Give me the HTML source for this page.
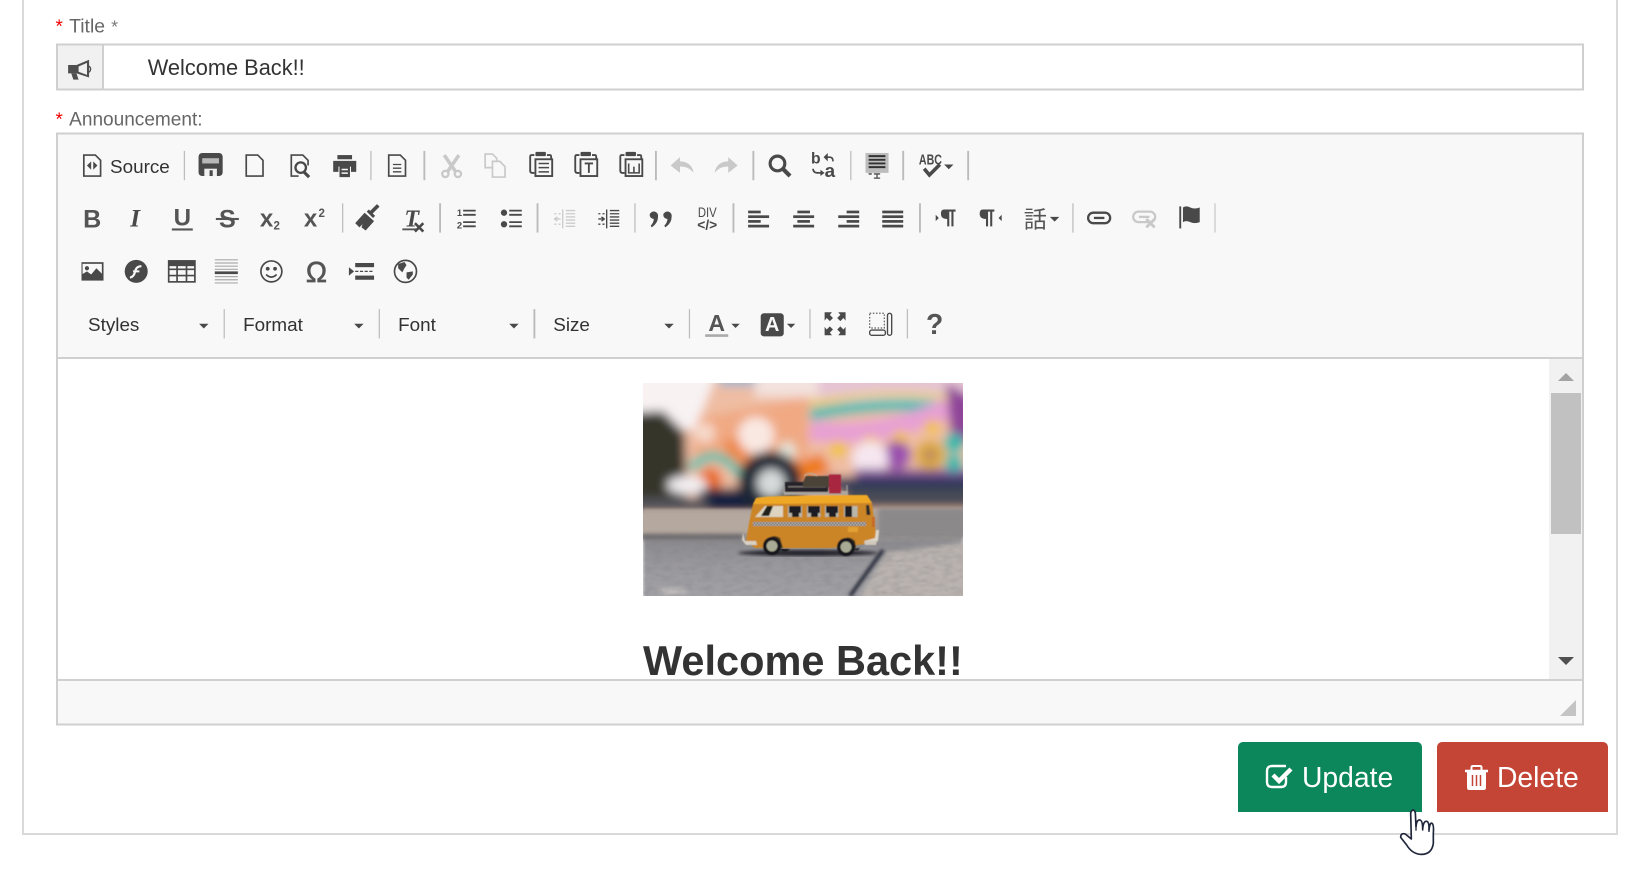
<!DOCTYPE html>
<html><head><meta charset="utf-8"><title>Announcement</title>
<style>
html,body{margin:0;padding:0;background:#fff;width:1643px;height:879px;overflow:hidden}
svg{display:block}
text{font-family:"Liberation Sans","Noto Sans CJK JP",sans-serif}
.s{fill:none;stroke:#4a4a4a}
.f{fill:#4a4a4a}
.g{fill:none;stroke:#c9c9c9}
.gf{fill:#c9c9c9}
.t{fill:#555;font-weight:bold}
.l{fill:#333;font-size:18px}
.sep{stroke:#bdbdbd;stroke-width:1.2}
</style></head><body>
<svg width="1643" height="879" viewBox="0 0 1643 879" xmlns="http://www.w3.org/2000/svg">
<defs>
<filter id="b" x="-10%" y="-10%" width="120%" height="120%"><feGaussianBlur stdDeviation="5"/></filter>
<filter id="b2" x="-10%" y="-10%" width="120%" height="120%"><feGaussianBlur stdDeviation="1.600"/></filter>
<filter id="b3" x="-10%" y="-30%" width="120%" height="160%"><feGaussianBlur stdDeviation="2.500"/></filter>
<filter id="bus" x="-5%" y="-5%" width="110%" height="110%"><feGaussianBlur stdDeviation=".6"/></filter>
<filter id="soft" x="0" y="0" width="100%" height="100%"><feGaussianBlur stdDeviation=".35"/></filter>
<filter id="noise" x="0" y="0" width="100%" height="100%"><feTurbulence type="fractalNoise" baseFrequency=".1 .25" numOctaves="3" seed="4"/><feColorMatrix values="0 0 0 0 .2  0 0 0 0 .2  0 0 0 0 .22  1.6 0 0 0 -.62"/><feGaussianBlur stdDeviation=".5"/></filter>
<clipPath id="ph"><rect width="320" height="213"/></clipPath>
<clipPath id="cnt"><rect x="58" y="359" width="1490" height="321"/></clipPath>
<linearGradient id="gr" x1="0" y1="0" x2="0" y2="1"><stop offset="0" stop-color="#b0a49c"/><stop offset=".25" stop-color="#a69e99"/><stop offset=".35" stop-color="#8c8b8f"/><stop offset=".6" stop-color="#9a999d"/><stop offset="1" stop-color="#a5a4a8"/></linearGradient>
<pattern id="ck" width="3" height="3" patternUnits="userSpaceOnUse"><rect width="3" height="3" fill="#3a3a3a"/><rect width="1.5" height="1.5" fill="#c8c8c8"/><rect x="1.5" y="1.5" width="1.5" height="1.5" fill="#c8c8c8"/></pattern>
</defs>

<!-- panel -->
<path d="M23 0V834H1617V0" fill="none" stroke="#d9d9d9" stroke-width="2"/>

<!-- title field -->
<rect x="57" y="44.500" width="1526" height="45" fill="#fff" stroke="#cfcfcf" stroke-width="2"/>
<rect x="58" y="45.500" width="45" height="43" fill="#f1f1f1"/>
<rect x="102" y="45" width="2" height="44" fill="#cfcfcf"/>

<!-- editor -->
<rect x="57" y="133.500" width="1526" height="591" fill="#f8f8f8" stroke="#cfcfcf" stroke-width="2"/>
<rect x="58" y="357" width="1524" height="2" fill="#d0d0d0"/>
<rect x="58" y="359" width="1524" height="321" fill="#fff"/>
<rect x="58" y="679" width="1524" height="2" fill="#d0d0d0"/>
<!-- scrollbar -->
<rect x="1549" y="359" width="33" height="320" fill="#f1f1f1"/>
<rect x="1551" y="393" width="30" height="141" fill="#c1c1c1"/>
<path d="M1558 381L1566 373L1574 381Z" fill="#a3a3a3"/>
<path d="M1558 657L1566 665L1574 657Z" fill="#505050"/>
<path d="M1560 716H1576V700Z" fill="#c4c4c4"/>

<!-- photo -->
<g transform="translate(643,383)" clip-path="url(#ph)">
<g filter="url(#b)">
<rect x="-15" y="-15" width="350" height="150" fill="#efbda3"/>
<path d="M-15-15H76L52 46H-15Z" fill="#f8f2f3"/>
<rect x="76" y="-15" width="45" height="18" fill="#9fb6d2"/>
<rect x="112" y="-15" width="70" height="29" fill="#f3e2de"/>
<rect x="175" y="-15" width="160" height="34" fill="#e6c4d4"/>
<path d="M-15 30L20 28L42 50L44 118H-15Z" fill="#35342c"/>
<path d="M55 35L165 14V90L50 80Z" fill="#f0a983"/>
<path d="M80 58L102 52L106 85L85 85Z" fill="#ee8a4e"/>
<circle cx="113" cy="52" r="18" fill="#f9e8e2"/>
<circle cx="62" cy="50" r="10" fill="#f6d9cb"/>
<circle cx="144" cy="68" r="9" fill="#e5e6da"/>
<path d="M167 20Q235 6 305 14" stroke="#ead25a" stroke-width="5" fill="none"/>
<path d="M167 32Q235 18 300 24" stroke="#2abcb2" stroke-width="11" fill="none"/>
<path d="M167 47Q230 58 305 25" stroke="#e7a0d4" stroke-width="20" fill="none"/>
<circle cx="195" cy="66" r="8" fill="#f3c420"/><circle cx="227" cy="61" r="8" fill="#f3c420"/><circle cx="257" cy="55" r="7" fill="#f3c420"/><circle cx="289" cy="44" r="7" fill="#f3c420"/>
<path d="M303 0L330 15V60H308Z" fill="#8e4498"/>
<circle cx="254" cy="72" r="14" fill="#9a50ad"/>
<circle cx="227" cy="76" r="18" fill="#f6e6f0"/>
<rect x="212" y="86" width="120" height="10" fill="#7d4f97"/>
<circle cx="311" cy="60" r="10" fill="#20baad"/><circle cx="311" cy="80" r="9" fill="#20baad"/>
<circle cx="287" cy="72" r="15" fill="#dbaa36"/>
<circle cx="287" cy="72" r="4" fill="#8a4a90"/>
<path d="M150 82L178 70L188 88L160 100Z" fill="#ee7a1e"/>
<rect x="180" y="94" width="155" height="14" fill="#2c3858"/>
<rect x="200" y="106" width="135" height="20" fill="#484c56"/>
<path d="M48 86Q72 58 97 92" stroke="#48c2b2" stroke-width="9" fill="none"/>
<circle cx="67" cy="97" r="12" fill="#e8691e"/>
<rect x="55" y="105" width="110" height="26" fill="#182440"/>
<circle cx="127" cy="100" r="32" fill="#1f2636"/>
<circle cx="128" cy="100" r="14" fill="#d6dada"/>
<ellipse cx="44" cy="102" rx="20" ry="9" fill="#f2eef1"/>
<rect x="-15" y="115" width="80" height="16" fill="#54555b"/>
</g>
<rect y="126" width="320" height="95" fill="url(#gr)" filter="url(#b2)"/>
<g filter="url(#b3)">
<rect x="-8" y="130" width="118" height="20" fill="#b5a99f"/>
<rect x="-8" y="151" width="108" height="5" fill="#5e5e64"/>
<rect x="235" y="125" width="95" height="30" fill="#8c898b"/>
<path d="M214 220L243 170L330 158V220Z" fill="#bab3af"/>
<ellipse cx="30" cy="208" rx="14" ry="3" fill="#c5c1bf"/>
</g>
<rect y="150" width="320" height="63" filter="url(#noise)" opacity=".4"/>
<path d="M207 213L240 167" stroke="#2e3240" stroke-width="4" fill="none" filter="url(#b2)"/>
<ellipse cx="165" cy="170" rx="70" ry="3" fill="#22232b" filter="url(#b2)"/>
<!-- bus -->
<g filter="url(#bus)">
<path d="M141 111V104M204 111V102" stroke="#9c9a96" stroke-width="1.500"/>
<rect x="141" y="108" width="64" height="4" fill="#aaa69f"/>
<rect x="142" y="99" width="43" height="10" fill="#262429"/>
<rect x="145" y="103" width="38" height="1.500" fill="#75706a"/>
<path d="M160 99L163 93H187V104H160Z" fill="#4b4239"/>
<path d="M161 93Q167 88 174 93" stroke="#b7ad9e" stroke-width="1.200" fill="none"/>
<rect x="186" y="91.500" width="12" height="19" fill="#a9263f"/>
<path d="M110 121L114 116Q125 113 224 112L229 120L233 150L232 160L188 165H112L103 158L106 140Z" fill="#cc8526"/>
<path d="M110 121L113 115Q125 112 224 112L229 120Z" fill="#efa826"/>
<path d="M112 134L122 123H140V134Z" fill="#dcd4c0"/>
<path d="M118 133L124 123H130L126 133Z" fill="#23211f"/>
<g fill="#b9b5a8">
<rect x="145" y="123" width="14" height="11"/><rect x="164" y="123" width="13.500" height="11"/><rect x="182" y="123" width="13.500" height="11"/><rect x="201" y="123" width="13.500" height="11"/>
</g>
<g fill="#1a1b20">
<path d="M146 123H158V130H156V134H149V130H146Z"/><path d="M165 123H177V130H175V134H168V130H165Z"/><path d="M183 123H195V130H193V134H186V130H183Z"/><path d="M202 123H209V134H202Z"/>
</g>
<path d="M223 122h3l1.500 10h-4z" fill="#2a2a2a"/>
<rect x="110" y="139" width="113" height="4" fill="url(#ck)"/>
<rect x="205" y="144" width="10" height="5" fill="#e3a030"/>
<path d="M124 158Q129 150 137 155L140 165H120Z" fill="#4b3a1a"/>
<path d="M197 160Q204 150 212 158L213 165H195Z" fill="#4b3a1a"/>
<path d="M100 150L102 158H113L114 162H103L99 157Z" fill="#d8d0c2"/>
<path d="M221 158H235L236 147L233 147L232 155Z" fill="#ddd6c9"/>
<path d="M221 158H234L233 162H222Z" fill="#cfc8bb"/>
<rect x="229" y="134" width="3" height="10" fill="#c66b26"/>
<circle cx="129" cy="163" r="9" fill="#17181c"/><circle cx="129" cy="163" r="5.500" fill="#a9ab94"/>
<circle cx="203" cy="164" r="9" fill="#17181c"/><circle cx="203" cy="164" r="5.500" fill="#a9ab94"/>
<path d="M136 166Q142 171 147 166Z" fill="#17181c"/><path d="M210 166Q214 169 217 165Z" fill="#17181c"/>
</g>
</g>

<!-- heading -->
<g clip-path="url(#cnt)"><text x="643" y="675" font-size="41.500" font-weight="bold" fill="#333">Welcome Back!!</text></g>

<!-- buttons (real px) -->
<path d="M1238 812V747a5 5 0 0 1 5-5H1417a5 5 0 0 1 5 5V812Z" fill="#0c865b"/>
<path d="M1437 812V747a5 5 0 0 1 5-5H1603a5 5 0 0 1 5 5V812Z" fill="#c44536"/>
<text x="1302" y="787" font-size="28.300" fill="#fff">Update</text>
<text x="1497" y="787" font-size="28.300" fill="#fff">Delete</text>
<path d="M1286 777V782Q1286 787 1281 787H1272Q1267 787 1267 782V771Q1267 766 1272 766H1286" fill="none" stroke="#fff" stroke-width="2.400"/>
<path d="M1273 775L1279 781L1291 769" fill="none" stroke="#fff" stroke-width="4.400"/>
<g transform="translate(1476.5,778)">
<path d="M-11.500-7H11.500" stroke="#fff" stroke-width="2.400"/>
<path d="M-5-8V-10.500Q-5-12 -3.500-12H3.500Q5-12 5-10.500V-8" fill="none" stroke="#fff" stroke-width="2"/>
<path d="M-9.500-6H9.500V9.500Q9.500 12 7.500 12H-7.500Q-9.500 12 -9.500 9.500Z" fill="#fff"/>
<path d="M-4-3V8M0-3V8M4-3V8" stroke="#c44536" stroke-width="1.500"/>
</g>

<!-- hand cursor -->
<g transform="translate(1220,660) scale(.33333)">
<path d="M572 458Q580 442 586 458L588 500Q590 478 600 480Q608 482 608 508Q610 482 620 484Q628 486 627 510Q630 486 636 490Q642 494 640 520L640 550Q635 585 600 583Q575 580 560 555L542 532Q542 518 556 522L574 537Z" fill="#fff" stroke="#20263a" stroke-width="5" stroke-linejoin="round"/>
<path d="M588 490V512M608 500V512M627 505V516" stroke="#20263a" stroke-width="4" fill="none"/>
</g>

<!-- displayed coordinates -->
<g transform="scale(1.0478)" stroke-width="1.600">
<text x="53" y="31" font-size="18" fill="#e00">*</text>
<text x="66" y="31" font-size="18.500" fill="#666">Title</text>
<text x="106" y="31" font-size="17" fill="#777">*</text>
<text x="53" y="120" font-size="18" fill="#e00">*</text>
<text x="66" y="120" font-size="18.200" fill="#666">Announcement:</text>
<text x="141" y="71.500" font-size="20.800" fill="#333">Welcome Back!!</text>

<!-- megaphone -->
<g transform="translate(76,66)" fill="#4f4f4f">
<path d="M-11-4H-3L9-9V8L-3 4H-11Z"/>
<path d="M-8 4H-3L-1 10H-6Z"/>
<path d="M9-3Q12 0 9 3" fill="none" stroke="#4f4f4f" stroke-width="1.300"/>
<path d="M-1-2.500L7-6V5.500L-1 2.500Z" fill="#f1f1f1"/>
</g>

<g filter="url(#soft)">
<!-- ROW 1 -->
<g transform="translate(88,158)"><path class="s" d="M-8-10H3L8-5V10H-8Z"/><path class="f" d="M-1-4L-5 0L-1 4ZM1-4L5 0L1 4Z"/></g>
<text class="l" x="105" y="165">Source</text>
<line class="sep" x1="176" x2="176" y1="144" y2="172"/>
<g transform="translate(201,157)"><rect class="f" x="-11.500" y="-11" width="23" height="22" rx="3.500"/><rect x="-8" y="-6" width="16" height="5" fill="#b8b8b8"/><rect x="-6" y="4" width="12" height="7" fill="#f0f0f0"/><rect class="f" x="-1" y="5.500" width="3" height="5.500"/></g>
<g transform="translate(243,158)"><path class="s" d="M-8-10H3L8-5V10H-8Z"/></g>
<g transform="translate(286,158)"><path class="s" d="M8 0V-5L3-10H-8V10H-1"/><circle class="s" cx="1" cy="2" r="5" stroke-width="2.200"/><path class="s" stroke-width="3" d="M4 6L9 11"/></g>
<g transform="translate(329,158)"><rect class="f" x="-7" y="-10" width="14" height="4"/><path class="f" d="M-11-4.500H11V6H6V1H-6V6H-11Z"/><path class="f" d="M-5 0H5V11H-5ZM-3 3V4.500H3V3ZM-3 6.500V8H3V6.500Z" fill-rule="evenodd"/></g>
<line class="sep" x1="354" x2="354" y1="144" y2="172"/>
<g transform="translate(379,158)"><path class="s" d="M-8-10H3L8-5V10H-8Z"/><path class="s" stroke-width="1.300" d="M-4-1H4M-4 2.500H4M-4 6H4"/></g>
<line x1="405" x2="405" y1="144" y2="172" stroke="#bbb" stroke-width="1.800"/>
<g transform="translate(431,158)"><path class="g" stroke-width="3.400" d="M-7-10L4 6M7-10L-4 6"/><circle class="g" cx="-6" cy="8" r="3" stroke-width="2.200"/><circle class="g" cx="6" cy="8" r="3" stroke-width="2.200"/></g>
<g transform="translate(472,158)"><path class="g" d="M-2 2H-9V-11H-2L2-7V-4"/><path class="g" d="M-2-4H5L10 1V11H-2Z"/></g>
<g transform="translate(516,157)"><path class="s" d="M-6-9H-9Q-10-9 -10-7V6Q-10 8 -8 8H-6" stroke-width="1.800"/><path class="s" d="M6-9H9Q10-9 10-7V-5" stroke-width="1.800"/><rect class="f" x="-5" y="-12" width="10" height="4" rx="1"/><rect class="s" x="-5" y="-5" width="16" height="16" stroke-width="1.800"/><path class="s" stroke-width="1.400" d="M-2-1H8M-2 3H8M-2 7H8"/></g>
<g transform="translate(559,157)"><path class="s" d="M-6-9H-9Q-10-9 -10-7V6Q-10 8 -8 8H-6" stroke-width="1.800"/><path class="s" d="M6-9H9Q10-9 10-7V-5" stroke-width="1.800"/><rect class="f" x="-5" y="-12" width="10" height="4" rx="1"/><rect class="s" x="-5" y="-5" width="16" height="16" stroke-width="1.800"/><path class="s" stroke-width="1.800" d="M-1-1H7M3-1V8"/></g>
<g transform="translate(602,157)"><path class="s" d="M-6-9H-9Q-10-9 -10-7V6Q-10 8 -8 8H-6" stroke-width="1.800"/><path class="s" d="M6-9H9Q10-9 10-7V-5" stroke-width="1.800"/><rect class="f" x="-5" y="-12" width="10" height="4" rx="1"/><rect class="s" x="-5" y="-5" width="16" height="16" stroke-width="1.800"/><path class="s" stroke-width="1.500" d="M-2-1V8H8V-1M3 2V8"/></g>
<line x1="626" x2="626" y1="144" y2="172" stroke="#bbb" stroke-width="1.800"/>
<g transform="translate(651,158)"><path class="gf" d="M-11 0L-2-8V-4C5-4 10 0 11 7C7 2 3 1 -2 1V7Z"/></g>
<g transform="translate(693,158) scale(-1,1)"><path class="gf" d="M-11 0L-2-8V-4C5-4 10 0 11 7C7 2 3 1 -2 1V7Z"/></g>
<line x1="719" x2="719" y1="144" y2="172" stroke="#bbb" stroke-width="1.800"/>
<g transform="translate(744,158)"><circle class="s" cx="-2" cy="-2" r="7" stroke-width="3"/><path class="s" stroke-width="4" d="M3 3L10 10"/></g>
<g transform="translate(786,158)"><text x="-12" y="-2" font-size="15" font-weight="bold" fill="#4a4a4a">b</text><text x="1" y="11" font-size="18" font-weight="bold" fill="#4a4a4a">a</text><path class="s" d="M2-8H6Q9-8 9-4M-10 3Q-10 7 -5 7H-2"/><path class="f" d="M4-12V-4L0-8ZM-3 4V10L1 7Z"/></g>
<line class="sep" x1="812" x2="812" y1="144" y2="172"/>
<g transform="translate(837,158)"><rect x="-11" y="-12" width="22" height="19" fill="#bdbdbd"/><path d="M-8-9H8M-8-5.500H8M-8-2H8M-8 1.500H8" stroke="#333" stroke-width="1.800"/><path class="s" d="M-3 8H3M-3 12H3M0 8V12" stroke-width="1.200"/><path d="M-8 8H-5" stroke="#555" stroke-width="1.500"/></g>
<line x1="862" x2="862" y1="144" y2="172" stroke="#bbb" stroke-width="1.800"/>
<g transform="translate(888,158)"><text x="-11" y="-1" font-size="14" font-weight="bold" fill="#4a4a4a" textLength="22" lengthAdjust="spacingAndGlyphs">ABC</text><path class="s" stroke-width="3.400" d="M-6 3L-1 9L9-1"/></g>
<path class="f" d="M901 157h9l-4.500 4.500Z"/>
<line x1="924" x2="924" y1="144" y2="172" stroke="#bbb" stroke-width="1.800"/>

<!-- ROW 2 -->
<text class="t" x="88" y="217" font-size="24" text-anchor="middle">B</text>
<text x="129" y="216" font-size="24" font-weight="bold" font-style="italic" fill="#4a4a4a" text-anchor="middle" style="font-family:'Liberation Serif',serif">I</text>
<text class="t" x="174" y="215" font-size="23" text-anchor="middle">U</text><rect x="164" y="218" width="20" height="2" fill="#555"/>
<text class="t" x="217" y="217" font-size="24" text-anchor="middle">S</text><rect x="206" y="208" width="22" height="2" fill="#555"/>
<text class="t" x="248" y="216" font-size="23">x</text><text class="t" x="261" y="219" font-size="11">2</text>
<text class="t" x="290" y="216" font-size="23">x</text><text class="t" x="304" y="207" font-size="11">2</text>
<line class="sep" x1="327" x2="327" y1="194" y2="222"/>
<g transform="translate(351,208)"><path class="f" d="M-12 5L-3-5L6 3L-2 12L-6 9L-5 6L-8 9ZM-1-6L1-8L7-2L5 0Z"/><path d="M3-5L10-12" stroke="#4a4a4a" stroke-width="3.500"/></g>
<text x="393" y="216" font-size="23" font-weight="bold" font-style="italic" fill="#4a4a4a" text-anchor="middle" style="font-family:'Liberation Serif',serif">T</text><rect x="384" y="218" width="13" height="1.800" fill="#555"/>
<path class="s" stroke-width="2.400" d="M396 213L404 221M404 213L396 221"/>
<line x1="420" x2="420" y1="194" y2="222" stroke="#bbb" stroke-width="1.800"/>
<g transform="translate(445,208)"><text x="-9" y="-2" font-size="9" fill="#4a4a4a" font-weight="bold">1</text><text x="-9" y="10" font-size="9" fill="#4a4a4a" font-weight="bold">2</text><path class="s" stroke-width="1.700" d="M-3-7H9M-3-3H9M-3 4H9M-3 8H9"/></g>
<g transform="translate(488,208)"><circle class="f" cx="-7" cy="-5" r="3"/><circle class="f" cx="-7" cy="6" r="3"/><path class="s" stroke-width="1.700" d="M-2-7H10M-2-3H10M-2 4H10M-2 8H10"/></g>
<line x1="513" x2="513" y1="194" y2="222" stroke="#bbb" stroke-width="1.800"/>
<g transform="translate(539,209)" stroke="#ccc" fill="none" stroke-width="1.300"><path d="M-2-9V9M1-8H10M1-5H10M1-2H10M1 1H10M1 4H10M1 7H10"/><path stroke-dasharray="2 2" d="M-10-5H-4M-10 5H-4"/><path d="M-10 0H-4M-10 0L-7-2M-10 0L-7 2"/></g>
<g transform="translate(581,209)" stroke="#4a4a4a" fill="none" stroke-width="1.300"><path d="M-2-9V9M1-8H10M1-5H10M1-2H10M1 1H10M1 4H10M1 7H10"/><path stroke-dasharray="2 2" d="M-10-5H-4M-10 5H-4"/><path d="M-10 0H-4M-4 0L-7-2M-4 0L-7 2"/></g>
<line class="sep" x1="606" x2="606" y1="194" y2="222"/>
<g transform="translate(631,209)" class="f"><path d="M-11-4A4 4 0 1 1-3-2Q-3 4 -9 8L-10 6.500Q-7 3 -7 0A4 4 0 0 1-11-4ZM2-4A4 4 0 1 1 10-2Q10 4 4 8L3 6.500Q6 3 6 0A4 4 0 0 1 2-4Z"/></g>
<g transform="translate(675,208)"><text x="0" y="-1" font-size="13" fill="#4a4a4a" text-anchor="middle" textLength="18" lengthAdjust="spacingAndGlyphs">DIV</text><text x="0" y="11" font-size="13" font-weight="bold" fill="#4a4a4a" text-anchor="middle" textLength="19" lengthAdjust="spacingAndGlyphs">&lt;/&gt;</text></g>
<line x1="700" x2="700" y1="194" y2="222" stroke="#bbb" stroke-width="1.800"/>
<g transform="translate(724,209)" class="f"><rect x="-10" y="-8" width="12" height="2.600"/><rect x="-10" y="-3.500" width="20" height="2.600"/><rect x="-10" y="1" width="12" height="2.600"/><rect x="-10" y="5.500" width="20" height="2.600"/></g>
<g transform="translate(767,209)" class="f"><rect x="-6" y="-8" width="12" height="2.600"/><rect x="-10" y="-3.500" width="20" height="2.600"/><rect x="-6" y="1" width="12" height="2.600"/><rect x="-10" y="5.500" width="20" height="2.600"/></g>
<g transform="translate(810,209)" class="f"><rect x="-2" y="-8" width="12" height="2.600"/><rect x="-10" y="-3.500" width="20" height="2.600"/><rect x="-2" y="1" width="12" height="2.600"/><rect x="-10" y="5.500" width="20" height="2.600"/></g>
<g transform="translate(852,209)" class="f"><rect x="-10" y="-8" width="20" height="2.600"/><rect x="-10" y="-3.500" width="20" height="2.600"/><rect x="-10" y="1" width="20" height="2.600"/><rect x="-10" y="5.500" width="20" height="2.600"/></g>
<line x1="878" x2="878" y1="194" y2="222" stroke="#bbb" stroke-width="1.800"/>
<g transform="translate(903,208)"><path class="f" d="M-10-3L-7 0L-10 3Z"/><path class="f" d="M-2-8H9V-6H7V8H5V-6H3V8H1V1Q-5 1 -5-4Q-5-8 -2-8Z"/></g>
<g transform="translate(946,208)"><path class="f" d="M10-3L7 0L10 3Z"/><path class="f" d="M-8-8H3V-6H1V8H-1V-6H-3V8H-5V1Q-11 1 -11-4Q-11-8 -8-8Z"/></g>
<text x="988" y="217" font-size="22" fill="#555" text-anchor="middle" style="font-family:'Noto Sans CJK JP',sans-serif">話</text>
<path class="f" d="M1002 207h9l-4.500 4.500Z"/>
<line class="sep" x1="1024" x2="1024" y1="194" y2="222"/>
<g transform="translate(1049,208)"><rect class="s" x="-10.500" y="-5" width="21" height="10" rx="5" stroke-width="2.200"/><path class="s" stroke-width="2.200" d="M-5 0H5"/></g>
<g transform="translate(1092,207)"><rect class="g" x="-10.500" y="-5" width="21" height="10" rx="5" stroke-width="2.200"/><path class="g" stroke-width="2.200" d="M-5 0H5"/><path d="M2 2L10 10M10 2L2 10" stroke="#c9c9c9" stroke-width="2.800"/></g>
<g transform="translate(1136,207)"><rect class="f" x="-10.500" y="-10" width="1.800" height="21"/><path class="f" d="M-7-9Q-4-11 0-9Q4-7 9-9V5Q4 7 0 5Q-4 3 -7 5Z"/></g>
<line x1="1160" x2="1160" y1="194" y2="222" stroke="#bbb" stroke-width="1.800"/>

<!-- ROW 3 -->
<g transform="translate(88,259)"><rect class="s" x="-10" y="-8" width="20" height="16"/><circle class="f" cx="-5" cy="-3" r="2"/><path class="f" d="M-10 8V3L-5 0L-1 3L4-3L10 3V8Z"/></g>
<g transform="translate(130,259)"><circle class="f" cx="0" cy="0" r="11"/><path d="M5-5Q0-5 -1 0T-6 6M-3 0H3" fill="none" stroke="#f8f8f8" stroke-width="2"/></g>
<g transform="translate(173,259)"><rect class="f" x="-12" y="-10" width="25" height="5"/><rect class="s" x="-12" y="-10" width="25" height="20"/><path class="s" d="M-12-2H13M-12 4H13M-4-6V10M5-6V10"/></g>
<g transform="translate(216,259)"><path stroke="#aaa" stroke-width="1.100" d="M-11-11H11M-11-8H11M-11-5H11M-11-2H11M-11 5H11M-11 8H11M-11 11H11"/><rect class="f" x="-11" y="0" width="22" height="2.600"/></g>
<g transform="translate(259,259)"><circle class="s" r="10"/><circle class="f" cx="-3.500" cy="-2.500" r="1.800"/><circle class="f" cx="3.500" cy="-2.500" r="1.800"/><path class="s" d="M-5 3Q0 8 5 3"/></g>
<text class="t" x="302" y="269" font-size="27" text-anchor="middle" style="font-weight:normal" stroke="#555" stroke-width=".6">Ω</text>
<g transform="translate(345,259)"><path class="f" d="M-12-4L-7 0L-12 4Z"/><rect class="f" x="-6" y="-8" width="18" height="4"/><rect class="f" x="-6" y="4" width="18" height="4"/><path d="M-6 0H12" stroke="#4a4a4a" stroke-width="1.300" stroke-dasharray="3 1.500"/></g>
<g transform="translate(387,259)"><circle class="s" r="10.500"/><path class="f" d="M-7-7L-1-9L1-6L-1-3L-3 1L-7-3ZM1 1L7 0L7 3L3 8L1 6Z"/></g>

<!-- ROW 4 -->
<text class="l" x="84" y="316">Styles</text><path class="f" d="M190 309h9l-4.500 4.500Z"/>
<line class="sep" x1="214" x2="214" y1="295" y2="323"/>
<text class="l" x="232" y="316">Format</text><path class="f" d="M338 309h9l-4.500 4.500Z"/>
<line class="sep" x1="362" x2="362" y1="295" y2="323"/>
<text class="l" x="380" y="316">Font</text><path class="f" d="M486 309h9l-4.500 4.500Z"/>
<line x1="510" x2="510" y1="295" y2="323" stroke="#bbb" stroke-width="1.800"/>
<text class="l" x="528" y="316">Size</text><path class="f" d="M634 309h9l-4.500 4.500Z"/>
<line class="sep" x1="658" x2="658" y1="295" y2="323"/>
<text class="t" x="684" y="316" font-size="22" text-anchor="middle">A</text><rect x="673" y="319" width="22" height="2.500" fill="#aaa"/>
<path class="f" d="M698 309h8l-4 4Z"/>
<rect class="f" x="726" y="299" width="22" height="22" rx="3"/><text x="737" y="316" font-size="19" font-weight="bold" fill="#f8f8f8" text-anchor="middle">A</text>
<path class="f" d="M751 309h8l-4 4Z"/>
<line class="sep" x1="773" x2="773" y1="295" y2="323"/>
<g transform="translate(797,309)" class="f"><path d="M-10-11H-3L-5-8.500L-2-5.500L-5-2.500L-8-5.500L-10-3ZM10-11H3L5-8.500L2-5.500L5-2.500L8-5.500L10-3ZM-10 11H-3L-5 8.500L-2 5.500L-5 2.500L-8 5.500L-10 3ZM10 11H3L5 8.500L2 5.500L5 2.500L8 5.500L10 3Z"/></g>
<g transform="translate(840,309)"><rect x="-10" y="-10" width="14" height="14" fill="none" stroke="#666" stroke-width="1.200" stroke-dasharray="1.500 1.500"/><rect class="s" x="-10" y="6" width="15" height="5" rx="2" stroke-width="1.300"/><rect class="s" x="7" y="-10" width="4" height="21" rx="2" stroke-width="1.300"/></g>
<line class="sep" x1="866" x2="866" y1="295" y2="323"/>
<text class="t" x="892" y="319" font-size="27" text-anchor="middle">?</text>
</g>
</g>
</svg>
</body></html>
